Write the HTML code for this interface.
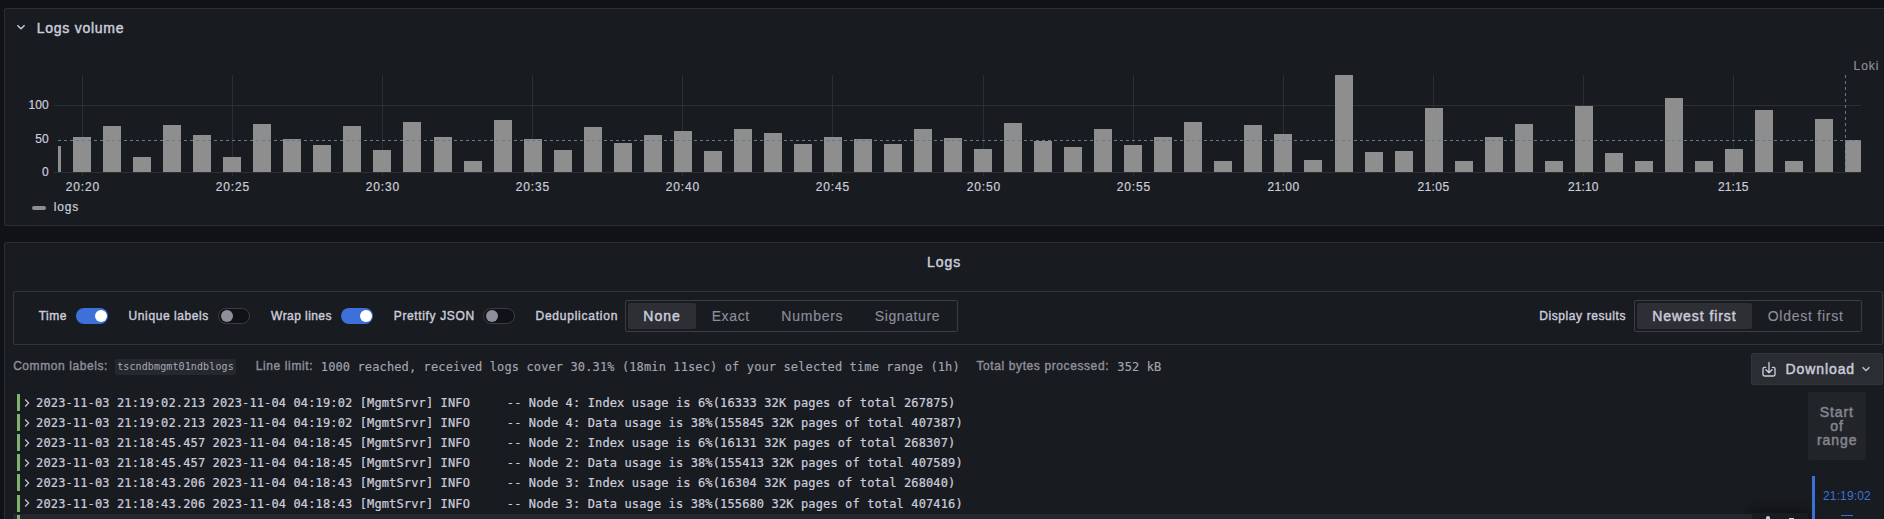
<!DOCTYPE html>
<html lang="en"><head><meta charset="utf-8"><title>Explore - Logs</title>
<style>
*{box-sizing:border-box;margin:0;padding:0}
html,body{width:1884px;height:519px;overflow:hidden;background:#111217;}
body{position:relative;font-family:"Liberation Sans",Arial,sans-serif;color:#ccccdc;font-size:14px;}
.panel{position:absolute;background:#181b1f;border:1px solid #2c2e33;border-radius:2px;}
#p1{left:4px;top:8px;width:1900px;height:218px;}
#p2{left:4px;top:242px;width:1900px;height:400px;}
.chart{position:absolute;left:0;top:0;}
.chart text{font-family:"Liberation Sans",Arial,sans-serif;}
.abs{position:absolute;white-space:nowrap;}
.mono{font-family:"DejaVu Sans Mono","Liberation Mono",monospace;}
.sw{position:absolute;top:308px;width:32px;height:16px;border-radius:8px;}
.sw.on{background:#3d71d9;}
.sw.off{background:#111217;border:1px solid #3a3c44;}
.sw i{position:absolute;top:2px;width:12px;height:12px;border-radius:50%;}
.sw.on i{right:1px;background:#fff;}
.sw.off i{left:2px;top:1px;background:#8f8f9b;}
.ctl{position:absolute;left:13px;top:291px;width:1870px;height:54px;border:1px solid #34363c;border-radius:2px;}
.rg{position:absolute;top:300px;height:32px;border:1px solid #3b3d44;border-radius:2px;background:#181b1f;}
.rb{position:absolute;top:303px;height:26px;border-radius:2px;background:#2d2f35;}
.tag{position:absolute;left:115px;top:359px;width:121px;height:15.5px;background:#25282d;border-radius:2px;font-size:10px;line-height:16px;text-align:center;color:#a9a9b8;letter-spacing:0.12px}
.lvl{position:absolute;left:17px;width:3px;height:17px;background:#7eb26d;}
.chev{position:absolute;left:23px;}
.row{position:absolute;left:36.1px;height:20px;line-height:20px;font-family:"DejaVu Sans Mono","Liberation Mono",monospace;font-size:12px;letter-spacing:0.13px;white-space:pre;color:#ccccdc;-webkit-text-stroke:0.22px #ccccdc;}
.mt{font-size:12px;line-height:16px;letter-spacing:0.12px;color:#a4a4b2;-webkit-text-stroke:0.15px #a4a4b2}
</style></head><body>
<div class="panel" id="p1"></div>
<div class="panel" id="p2"></div>
<svg class="chart" width="1884" height="230" viewBox="0 0 1884 230">
<g fill="#2b2f33" shape-rendering="crispEdges">
<rect x="82" y="75" width="1" height="101"/>
<rect x="232" y="75" width="1" height="101"/>
<rect x="382" y="75" width="1" height="101"/>
<rect x="532" y="75" width="1" height="101"/>
<rect x="682" y="75" width="1" height="101"/>
<rect x="832" y="75" width="1" height="101"/>
<rect x="983" y="75" width="1" height="101"/>
<rect x="1133" y="75" width="1" height="101"/>
<rect x="1283" y="75" width="1" height="101"/>
<rect x="1433" y="75" width="1" height="101"/>
<rect x="1583" y="75" width="1" height="101"/>
<rect x="1733" y="75" width="1" height="101"/>
<rect x="54" y="105" width="1807" height="1"/>
<rect x="54" y="172" width="1807" height="1"/>
</g>
<g fill="#8e8e8e" shape-rendering="crispEdges">
<rect x="58" y="146" width="3" height="26"/>
<rect x="73" y="137" width="18" height="35"/>
<rect x="103" y="126" width="18" height="46"/>
<rect x="133" y="157" width="18" height="15"/>
<rect x="163" y="125" width="18" height="47"/>
<rect x="193" y="135" width="18" height="37"/>
<rect x="223" y="157" width="18" height="15"/>
<rect x="253" y="124" width="18" height="48"/>
<rect x="283" y="139" width="18" height="33"/>
<rect x="313" y="145" width="18" height="27"/>
<rect x="343" y="126" width="18" height="46"/>
<rect x="373" y="150" width="18" height="22"/>
<rect x="403" y="122" width="18" height="50"/>
<rect x="434" y="137" width="18" height="35"/>
<rect x="464" y="161" width="18" height="11"/>
<rect x="494" y="120" width="18" height="52"/>
<rect x="524" y="139" width="18" height="33"/>
<rect x="554" y="150" width="18" height="22"/>
<rect x="584" y="127" width="18" height="45"/>
<rect x="614" y="143" width="18" height="29"/>
<rect x="644" y="135" width="18" height="37"/>
<rect x="674" y="131" width="18" height="41"/>
<rect x="704" y="151" width="18" height="21"/>
<rect x="734" y="129" width="18" height="43"/>
<rect x="764" y="133" width="18" height="39"/>
<rect x="794" y="144" width="18" height="28"/>
<rect x="824" y="137" width="18" height="35"/>
<rect x="854" y="139" width="18" height="33"/>
<rect x="884" y="144" width="18" height="28"/>
<rect x="914" y="129" width="18" height="43"/>
<rect x="944" y="138" width="18" height="34"/>
<rect x="974" y="149" width="18" height="23"/>
<rect x="1004" y="123" width="18" height="49"/>
<rect x="1034" y="141" width="18" height="31"/>
<rect x="1064" y="147" width="18" height="25"/>
<rect x="1094" y="129" width="18" height="43"/>
<rect x="1124" y="145" width="18" height="27"/>
<rect x="1154" y="137" width="18" height="35"/>
<rect x="1184" y="122" width="18" height="50"/>
<rect x="1214" y="161" width="18" height="11"/>
<rect x="1244" y="125" width="18" height="47"/>
<rect x="1274" y="134" width="18" height="38"/>
<rect x="1304" y="160" width="18" height="12"/>
<rect x="1335" y="75" width="18" height="97"/>
<rect x="1365" y="152" width="18" height="20"/>
<rect x="1395" y="151" width="18" height="21"/>
<rect x="1425" y="108" width="18" height="64"/>
<rect x="1455" y="161" width="18" height="11"/>
<rect x="1485" y="137" width="18" height="35"/>
<rect x="1515" y="124" width="18" height="48"/>
<rect x="1545" y="161" width="18" height="11"/>
<rect x="1575" y="106" width="18" height="66"/>
<rect x="1605" y="153" width="18" height="19"/>
<rect x="1635" y="161" width="18" height="11"/>
<rect x="1665" y="98" width="18" height="74"/>
<rect x="1695" y="161" width="18" height="11"/>
<rect x="1725" y="149" width="18" height="23"/>
<rect x="1755" y="110" width="18" height="62"/>
<rect x="1785" y="161" width="18" height="11"/>
<rect x="1815" y="119" width="18" height="53"/>
<rect x="1845" y="140" width="16" height="32"/>
</g>
<g stroke="#607d8b" stroke-width="1" stroke-dasharray="3 3" shape-rendering="crispEdges">
<line x1="58" y1="140.5" x2="1861" y2="140.5"/>
<line x1="1845.5" y1="75" x2="1845.5" y2="172"/>
</g>
<g class="ax" fill="#ccccdc" stroke="#ccccdc" stroke-width="0.2" font-size="12">
<text x="48.6" y="109" text-anchor="end">100</text>
<text x="48.6" y="143.1" text-anchor="end">50</text>
<text x="48.6" y="175.8" text-anchor="end">0</text>
</g>
</svg>
<div class="abs" style="left:65.70px;top:179px;font-size:12px;line-height:16px;letter-spacing:0.861px;color:#ccccdc;-webkit-text-stroke:0.2px #ccccdc;">20:20</div>
<div class="abs" style="left:215.70px;top:179px;font-size:12px;line-height:16px;letter-spacing:0.870px;color:#ccccdc;-webkit-text-stroke:0.2px #ccccdc;">20:25</div>
<div class="abs" style="left:365.70px;top:179px;font-size:12px;line-height:16px;letter-spacing:0.861px;color:#ccccdc;-webkit-text-stroke:0.2px #ccccdc;">20:30</div>
<div class="abs" style="left:515.70px;top:179px;font-size:12px;line-height:16px;letter-spacing:0.870px;color:#ccccdc;-webkit-text-stroke:0.2px #ccccdc;">20:35</div>
<div class="abs" style="left:665.70px;top:179px;font-size:12px;line-height:16px;letter-spacing:0.861px;color:#ccccdc;-webkit-text-stroke:0.2px #ccccdc;">20:40</div>
<div class="abs" style="left:815.70px;top:179px;font-size:12px;line-height:16px;letter-spacing:0.870px;color:#ccccdc;-webkit-text-stroke:0.2px #ccccdc;">20:45</div>
<div class="abs" style="left:966.70px;top:179px;font-size:12px;line-height:16px;letter-spacing:0.861px;color:#ccccdc;-webkit-text-stroke:0.2px #ccccdc;">20:50</div>
<div class="abs" style="left:1116.70px;top:179px;font-size:12px;line-height:16px;letter-spacing:0.870px;color:#ccccdc;-webkit-text-stroke:0.2px #ccccdc;">20:55</div>
<div class="abs" style="left:1267.40px;top:179px;font-size:12px;line-height:16px;letter-spacing:0.411px;color:#ccccdc;-webkit-text-stroke:0.2px #ccccdc;">21:00</div>
<div class="abs" style="left:1417.40px;top:179px;font-size:12px;line-height:16px;letter-spacing:0.420px;color:#ccccdc;-webkit-text-stroke:0.2px #ccccdc;">21:05</div>
<div class="abs" style="left:1568.10px;top:179px;font-size:12px;line-height:16px;letter-spacing:0.061px;color:#ccccdc;-webkit-text-stroke:0.2px #ccccdc;">21:10</div>
<div class="abs" style="left:1718.10px;top:179px;font-size:12px;line-height:16px;letter-spacing:0.070px;color:#ccccdc;-webkit-text-stroke:0.2px #ccccdc;">21:15</div>
<svg class="abs" style="left:16px;top:23px" width="10" height="8" viewBox="0 0 10 8"><path d="M1.4 2.2 L5 5.8 L8.6 2.2" fill="none" stroke="#ccccdc" stroke-width="1.4"/></svg>
<div class="abs" style="left:32px;top:206px;width:14px;height:4px;border-radius:2px;background:#8e8e8e"></div>
<div class="ctl"></div>
<div class="sw on" style="left:76px"><i></i></div>
<div class="sw off" style="left:218px"><i></i></div>
<div class="sw on" style="left:341px"><i></i></div>
<div class="sw off" style="left:483px"><i></i></div>
<div class="rg" style="left:625px;width:333px"></div>
<div class="rb" style="left:628px;width:68px"></div>
<div class="rg" style="left:1634px;width:228px"></div>
<div class="rb" style="left:1637px;width:115px"></div>
<div class="tag mono">tscndbmgmt01ndblogs</div>
<div class="abs mono mt" style="left:320.8px;top:359.4px;">1000 reached, received logs cover 30.31% (18min 11sec) of your selected time range (1h)</div>
<div class="abs mono mt" style="left:1117.3px;top:359.4px;">352 kB</div>
<div class="abs" style="left:1751px;top:353px;width:132px;height:32px;background:#2a2d32;border-radius:2px;border:1px solid #31343a"></div>
<svg class="abs" style="left:1761.1px;top:361px" width="16" height="17" viewBox="0 0 16 17"><path d="M8 1.3 V11.6 M4.9 8.7 L8 11.8 L11.1 8.7 M4.6 6.4 H3.4 Q2 6.4 2 7.8 V13.6 Q2 15 3.4 15 H12.6 Q14 15 14 13.6 V7.8 Q14 6.4 12.6 6.4 H11.4" fill="none" stroke="#ccccdc" stroke-width="1.35" stroke-linecap="round" stroke-linejoin="round"/></svg>
<svg class="abs" style="left:1861px;top:365px" width="10" height="8" viewBox="0 0 10 8"><path d="M1.6 2.2 L5 5.6 L8.4 2.2" fill="none" stroke="#ccccdc" stroke-width="1.3"/></svg>
<div class="lvl" style="top:394px"></div>
<svg class="chev" style="top:397.5px" width="8" height="10" viewBox="0 0 8 10"><path d="M2.2 1.5 L5.6 5 L2.2 8.5" fill="none" stroke="#c4c4d4" stroke-width="1.25"/></svg>
<div class="row" style="top:393px">2023-11-03 21:19:02.213 2023-11-04 04:19:02 [MgmtSrvr] INFO     -- Node 4: Index usage is 6%(16333 32K pages of total 267875)</div>
<div class="lvl" style="top:414px"></div>
<svg class="chev" style="top:417.5px" width="8" height="10" viewBox="0 0 8 10"><path d="M2.2 1.5 L5.6 5 L2.2 8.5" fill="none" stroke="#c4c4d4" stroke-width="1.25"/></svg>
<div class="row" style="top:413px">2023-11-03 21:19:02.213 2023-11-04 04:19:02 [MgmtSrvr] INFO     -- Node 4: Data usage is 38%(155845 32K pages of total 407387)</div>
<div class="lvl" style="top:434px"></div>
<svg class="chev" style="top:437.5px" width="8" height="10" viewBox="0 0 8 10"><path d="M2.2 1.5 L5.6 5 L2.2 8.5" fill="none" stroke="#c4c4d4" stroke-width="1.25"/></svg>
<div class="row" style="top:433px">2023-11-03 21:18:45.457 2023-11-04 04:18:45 [MgmtSrvr] INFO     -- Node 2: Index usage is 6%(16131 32K pages of total 268307)</div>
<div class="lvl" style="top:454px"></div>
<svg class="chev" style="top:457.5px" width="8" height="10" viewBox="0 0 8 10"><path d="M2.2 1.5 L5.6 5 L2.2 8.5" fill="none" stroke="#c4c4d4" stroke-width="1.25"/></svg>
<div class="row" style="top:453px">2023-11-03 21:18:45.457 2023-11-04 04:18:45 [MgmtSrvr] INFO     -- Node 2: Data usage is 38%(155413 32K pages of total 407589)</div>
<div class="lvl" style="top:474px"></div>
<svg class="chev" style="top:477.5px" width="8" height="10" viewBox="0 0 8 10"><path d="M2.2 1.5 L5.6 5 L2.2 8.5" fill="none" stroke="#c4c4d4" stroke-width="1.25"/></svg>
<div class="row" style="top:473px">2023-11-03 21:18:43.206 2023-11-04 04:18:43 [MgmtSrvr] INFO     -- Node 3: Index usage is 6%(16304 32K pages of total 268040)</div>
<div class="lvl" style="top:495px"></div>
<svg class="chev" style="top:498.3px" width="8" height="10" viewBox="0 0 8 10"><path d="M2.2 1.5 L5.6 5 L2.2 8.5" fill="none" stroke="#c4c4d4" stroke-width="1.25"/></svg>
<div class="row" style="top:493.8px">2023-11-03 21:18:43.206 2023-11-04 04:18:43 [MgmtSrvr] INFO     -- Node 3: Data usage is 38%(155680 32K pages of total 407416)</div>
<div class="lvl" style="top:515px"></div>
<svg class="chev" style="top:519.0px" width="8" height="10" viewBox="0 0 8 10"><path d="M2.2 1.5 L5.6 5 L2.2 8.5" fill="none" stroke="#c4c4d4" stroke-width="1.25"/></svg>
<div class="row" style="top:514.5px">2023-11-03 21:18:40.955 2023-11-04 04:18:40 [MgmtSrvr] INFO     -- Node 1: Index usage is 6%(16290 32K pages of total 268102)</div>
<div class="abs" style="left:1752px;top:513px;width:56px;height:12px;background:#181b1f;box-shadow:0 -1px 11px 2px rgba(0,0,0,0.42);border-radius:2px"></div>
<div class="abs" style="left:13px;top:514px;width:1739px;height:6px;background:#24272c"></div>
<div class="lvl" style="top:515px"></div>
<div class="abs" style="left:1765.8px;top:516.4px;width:4.4px;height:6px;border-radius:2.2px 2.2px 0 0;background:#ccccdc"></div>
<div class="abs" style="left:1789px;top:517.8px;width:5.3px;height:3px;background:#ccccdc"></div>
<div class="abs" style="left:1808px;top:392px;width:58px;height:68px;background:#212429;border-radius:2px;"></div>
<div class="abs" style="left:1812px;top:476px;width:3px;height:50px;background:#3d71d9"></div>
<div class="abs" style="left:1841px;top:515px;width:12px;height:1px;background:#3d71d9"></div>
<div class="abs" style="left:36.80px;top:18px;font-size:14px;line-height:20px;letter-spacing:0.729px;color:#ccccdc;-webkit-text-stroke:0.45px #ccccdc;">Logs volume</div>
<div class="abs" style="left:53.79px;top:199px;font-size:12px;line-height:16px;letter-spacing:0.810px;color:#ccccdc;-webkit-text-stroke:0.2px #ccccdc;">logs</div>
<div class="abs" style="left:1853.52px;top:58px;font-size:12px;line-height:16px;letter-spacing:0.960px;color:#8e8e9b;-webkit-text-stroke:0.2px #8e8e9b;">Loki</div>
<div class="abs" style="left:927.00px;top:252px;font-size:14px;line-height:20px;letter-spacing:0.965px;color:#ccccdc;-webkit-text-stroke:0.45px #ccccdc;">Logs</div>
<div class="abs" style="left:38.78px;top:308px;font-size:12px;line-height:16px;letter-spacing:0.446px;color:#ccccdc;-webkit-text-stroke:0.4px #ccccdc;">Time</div>
<div class="abs" style="left:128.62px;top:308px;font-size:12px;line-height:16px;letter-spacing:0.587px;color:#ccccdc;-webkit-text-stroke:0.4px #ccccdc;">Unique labels</div>
<div class="abs" style="left:271.10px;top:308px;font-size:12px;line-height:16px;letter-spacing:0.434px;color:#ccccdc;-webkit-text-stroke:0.4px #ccccdc;">Wrap lines</div>
<div class="abs" style="left:393.77px;top:308px;font-size:12px;line-height:16px;letter-spacing:0.640px;color:#ccccdc;-webkit-text-stroke:0.4px #ccccdc;">Prettify JSON</div>
<div class="abs" style="left:535.47px;top:308px;font-size:12px;line-height:16px;letter-spacing:0.762px;color:#ccccdc;-webkit-text-stroke:0.4px #ccccdc;">Deduplication</div>
<div class="abs" style="left:1539.27px;top:308px;font-size:12px;line-height:16px;letter-spacing:0.585px;color:#ccccdc;-webkit-text-stroke:0.4px #ccccdc;">Display results</div>
<div class="abs" style="left:643.30px;top:306px;font-size:14px;line-height:20px;letter-spacing:1.034px;color:#ccccdc;-webkit-text-stroke:0.45px #ccccdc;">None</div>
<div class="abs" style="left:711.65px;top:306px;font-size:14px;line-height:20px;letter-spacing:0.634px;color:#8e8e9b;-webkit-text-stroke:0.15px #8e8e9b;">Exact</div>
<div class="abs" style="left:781.35px;top:306px;font-size:14px;line-height:20px;letter-spacing:0.744px;color:#8e8e9b;-webkit-text-stroke:0.15px #8e8e9b;">Numbers</div>
<div class="abs" style="left:874.86px;top:306px;font-size:14px;line-height:20px;letter-spacing:0.591px;color:#8e8e9b;-webkit-text-stroke:0.15px #8e8e9b;">Signature</div>
<div class="abs" style="left:1652.30px;top:306px;font-size:14px;line-height:20px;letter-spacing:0.930px;color:#ccccdc;-webkit-text-stroke:0.45px #ccccdc;">Newest first</div>
<div class="abs" style="left:1767.74px;top:306px;font-size:14px;line-height:20px;letter-spacing:0.742px;color:#8e8e9b;-webkit-text-stroke:0.15px #8e8e9b;">Oldest first</div>
<div class="abs" style="left:13.14px;top:358px;font-size:12px;line-height:16px;letter-spacing:0.577px;color:#8e8e9b;-webkit-text-stroke:0.4px #8e8e9b;">Common labels:</div>
<div class="abs" style="left:255.67px;top:358px;font-size:12px;line-height:16px;letter-spacing:0.630px;color:#8e8e9b;-webkit-text-stroke:0.4px #8e8e9b;">Line limit:</div>
<div class="abs" style="left:976.48px;top:358px;font-size:12px;line-height:16px;letter-spacing:0.602px;color:#8e8e9b;-webkit-text-stroke:0.4px #8e8e9b;">Total bytes processed:</div>
<div class="abs" style="left:1785.50px;top:359px;font-size:14px;line-height:20px;letter-spacing:0.913px;color:#ccccdc;-webkit-text-stroke:0.45px #ccccdc;">Download</div>
<div class="abs" style="left:1819.81px;top:405px;font-size:14px;line-height:14px;letter-spacing:0.893px;color:#85858f;-webkit-text-stroke:0.5px #85858f;">Start</div>
<div class="abs" style="left:1830.36px;top:419px;font-size:14px;line-height:14px;letter-spacing:0.792px;color:#85858f;-webkit-text-stroke:0.5px #85858f;">of</div>
<div class="abs" style="left:1816.92px;top:433px;font-size:14px;line-height:14px;letter-spacing:0.961px;color:#85858f;-webkit-text-stroke:0.5px #85858f;">range</div>
<div class="abs" style="left:1823.00px;top:488px;font-size:12px;line-height:16px;letter-spacing:0.142px;color:#3d71d9;">21:19:02</div>
</body></html>
